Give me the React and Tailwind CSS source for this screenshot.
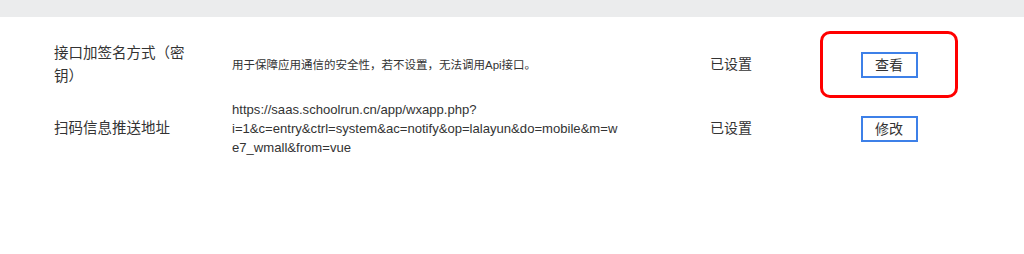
import React from "react";

const rows = [
  {
    label: "接口加签名方式（密钥）",
    desc: ["用于保障应用通信的安全性，若不设置，无法调用Api接口。"],
    status: "已设置",
    action: "查看",
    marked: true,
  },
  {
    label: "扫码信息推送地址",
    desc: [
      "https://saas.schoolrun.cn/app/wxapp.php?",
      "i=1&c=entry&ctrl=system&ac=notify&op=lalayun&do=mobile&m=w",
      "e7_wmall&from=vue",
    ],
    status: "已设置",
    action: "修改",
    url: true,
  },
];

function App() {
  return (
    <div
      className="w-[1024px] h-[254px] bg-white text-[#333] overflow-hidden"
      style={{ fontFamily: '"Liberation Sans", "Noto Sans CJK SC", sans-serif' }}
    >
      <div className="h-[17px] bg-[#ebeced]" />
      <div className="pt-[14px] flex flex-col gap-[2px]">
        {rows.map((r) => (
          <div key={r.action} className="flex items-center pl-[54px]">
            {/* label */}
            <div className="w-[178px] shrink-0">
              <div className="w-[135px] text-[14.5px] leading-[23px]">{r.label}</div>
            </div>
            {/* description */}
            <div className="w-[478px] shrink-0">
              {r.url ? (
                <div className="text-[13.1px] leading-[19px] whitespace-nowrap">
                  {r.desc.map((line) => (
                    <div key={line}>{line}</div>
                  ))}
                </div>
              ) : (
                <div className="text-[11.5px] leading-[16px]">{r.desc[0]}</div>
              )}
            </div>
            {/* status */}
            <div className="w-[110px] shrink-0 text-[14px]">{r.status}</div>
            {/* action */}
            <div
              className={
                r.marked
                  ? "w-[138px] h-[67px] shrink-0 flex items-center justify-center border-[3px] border-[#ff0000] rounded-[10px]"
                  : "w-[138px] shrink-0 flex items-center justify-center"
              }
            >
              <button className="w-[57px] h-[26px] border-2 border-[#3d80e8] text-[14px] leading-none bg-white">
                {r.action}
              </button>
            </div>
          </div>
        ))}
      </div>
    </div>
  );
}

export default App;
